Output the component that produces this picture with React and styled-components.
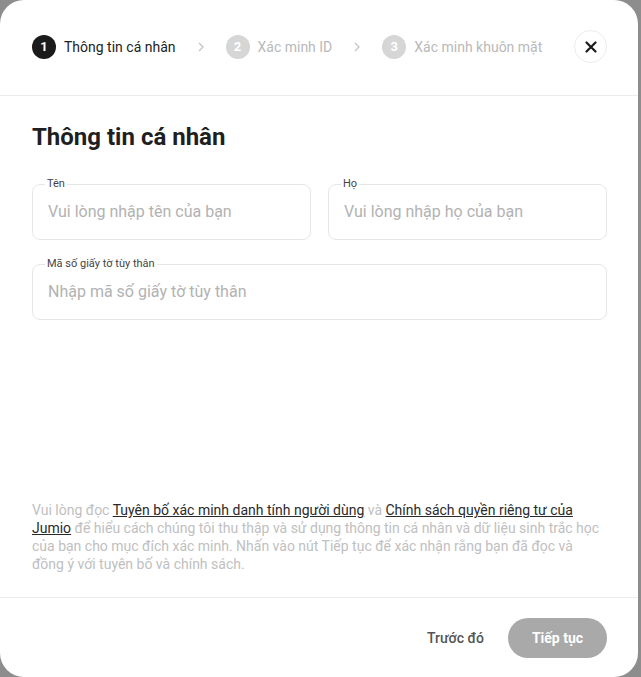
import React from 'react';
import styled, {createGlobalStyle} from 'styled-components';

const Global = createGlobalStyle`
    html, body {
        margin: 0;
        padding: 0;
        background: #8d8d8d;
        font-family: Roboto, "Noto Sans", Arial, sans-serif;
    }
`
const Modal = styled.div`
    width: 638px;
    height: 677px;
    background: #ffffff;
    border-radius: 24px;
    display: flex;
    flex-direction: column;
    box-sizing: border-box;
    overflow: hidden;
`
const Header = styled.div`
    height: 96px;
    flex: none;
    display: flex;
    align-items: center;
    padding: 0 31px 0 32px;
    border-bottom: 1px solid #ececec;
    box-sizing: border-box;
`
const Steps = styled.div`
    display: flex;
    align-items: center;
    flex: 1;
    padding-bottom: 2px;
`
const Step = styled.div`
    display: flex;
    align-items: center;
    gap: 8px;
    font-size: 14px;
    color: ${p => p.active ? '#222222' : '#b9b9b9'};
`
const Num = styled.span`
    width: 24px;
    height: 24px;
    border-radius: 50%;
    background: ${p => p.active ? '#1b1b1b' : '#d6d6d6'};
    color: #ffffff;
    font-size: 13px;
    font-weight: 700;
    display: flex;
    align-items: center;
    justify-content: center;
`
const Chevron = styled.svg`
    width: 10px;
    height: 10px;
    margin: 0 20px 0 20px;
`
const Close = styled.button`
    width: 33px;
    height: 33px;
    border-radius: 50%;
    border: 1px solid #ececec;
    background: #ffffff;
    display: flex;
    align-items: center;
    justify-content: center;
    padding: 0;
    margin-top: -2px;
`
const Body = styled.div`
    flex: 1;
    padding: 25px 31px 0 32px;
    display: flex;
    flex-direction: column;
`
const Title = styled.h2`
    margin: 0 0 25px;
    font-size: 24px;
    font-weight: 700;
    color: #1f1f1f;
    line-height: 32px;
`
const Row = styled.div`
    display: flex;
    gap: 17px;
    margin-bottom: 18px;
`
const Field = styled.fieldset`
    flex: 1;
    margin: -1px 0 0;
    height: 63px;
    box-sizing: border-box;
    border: 1px solid #e6e6e6;
    border-radius: 8px;
    padding: 0 15px 0 12px;
    > legend {
        font-size: 11px;
        color: #444;
        padding: 0 2px;
        line-height: 14px;
    }
    > input {
        border: none;
        outline: none;
        width: 100%;
        box-sizing: border-box;
        font-family: inherit;
        font-size: 16px;
        padding: 0 0 0 3px;
        margin-top: 11px;
        color: #222;
        &::placeholder {
            color: #b2b2b2;
        }
    }
`
const Note = styled.p`
    margin: auto 0 24px;
    font-size: 14px;
    line-height: 18px;
    color: #c0c0c0;
    > a {
        color: #2a2a2a;
        text-decoration: underline;
    }
`
const Footer = styled.div`
    height: 79px;
    flex: none;
    border-top: 1px solid #ececec;
    display: flex;
    align-items: center;
    justify-content: flex-end;
    gap: 24px;
    padding: 0 31px 0 32px;
`
const Back = styled.button`
    border: none;
    background: none;
    font-family: inherit;
    font-size: 14px;
    font-weight: 500;
    color: #555;
    padding: 0;
`
const Next = styled.button`
    border: none;
    background: #a9a9a9;
    color: #ffffff;
    font-family: inherit;
    font-size: 14px;
    font-weight: 700;
    width: 99px;
    height: 40px;
    border-radius: 20px;
`

const steps = ['Thông tin cá nhân', 'Xác minh ID', 'Xác minh khuôn mặt']

export default function App(){
    return(
        <Modal>
            <Global/>
            <Header>
                <Steps>
                    {steps.map((s, i) => (
                        <React.Fragment key={s}>
                            {i > 0 &&
                                <Chevron viewBox="0 0 10 10">
                                    <path d="M3 1 L7 5 L3 9" fill="none" stroke="#c4c4c4" strokeWidth="1.3"/>
                                </Chevron>}
                            <Step active={i === 0}>
                                <Num active={i === 0}>{i + 1}</Num>
                                {s}
                            </Step>
                        </React.Fragment>
                    ))}
                </Steps>
                <Close>
                    <svg width="12" height="12" viewBox="0 0 12 12">
                        <path d="M1.5 1.5 L10.5 10.5 M10.5 1.5 L1.5 10.5" stroke="#1b1b1b" strokeWidth="2.2" strokeLinecap="round"/>
                    </svg>
                </Close>
            </Header>
            <Body>
                <Title>Thông tin cá nhân</Title>
                <Row>
                    <Field>
                        <legend>Tên</legend>
                        <input placeholder="Vui lòng nhập tên của bạn"/>
                    </Field>
                    <Field>
                        <legend>Họ</legend>
                        <input placeholder="Vui lòng nhập họ của bạn"/>
                    </Field>
                </Row>
                <Row>
                    <Field>
                        <legend>Mã số giấy tờ tùy thân</legend>
                        <input placeholder="Nhập mã số giấy tờ tùy thân"/>
                    </Field>
                </Row>
                <Note>
                    Vui lòng đọc <a>Tuyên bố xác minh danh tính người dùng</a> và <a>Chính sách quyền riêng tư của Jumio</a> để hiểu cách chúng tôi thu thập và sử dụng thông tin cá nhân và dữ liệu sinh trắc học của bạn cho mục đích xác minh. Nhấn vào nút Tiếp tục để xác nhận rằng bạn đã đọc và đồng ý với tuyên bố và chính sách.
                </Note>
            </Body>
            <Footer>
                <Back>Trước đó</Back>
                <Next>Tiếp tục</Next>
            </Footer>
        </Modal>
    )
}
